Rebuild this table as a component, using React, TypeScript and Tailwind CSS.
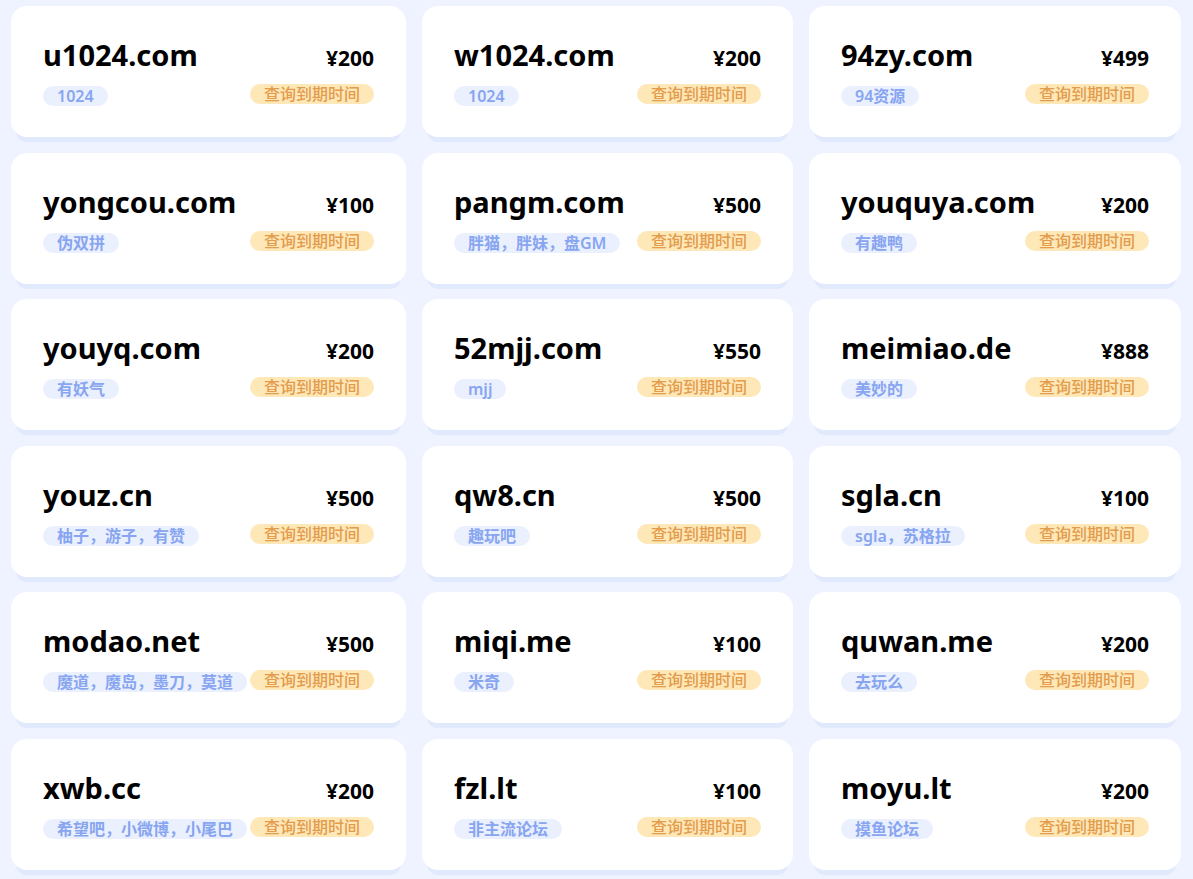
const domains = [
  { name: 'u1024.com', price: 200, tag: '1024' },
  { name: 'w1024.com', price: 200, tag: '1024' },
  { name: '94zy.com', price: 499, tag: '94资源' },
  { name: 'yongcou.com', price: 100, tag: '伪双拼' },
  { name: 'pangm.com', price: 500, tag: '胖猫，胖妹，盘GM' },
  { name: 'youquya.com', price: 200, tag: '有趣鸭' },
  { name: 'youyq.com', price: 200, tag: '有妖气' },
  { name: '52mjj.com', price: 550, tag: 'mjj' },
  { name: 'meimiao.de', price: 888, tag: '美妙的' },
  { name: 'youz.cn', price: 500, tag: '柚子，游子，有赞' },
  { name: 'qw8.cn', price: 500, tag: '趣玩吧' },
  { name: 'sgla.cn', price: 100, tag: 'sgla，苏格拉' },
  { name: 'modao.net', price: 500, tag: '魔道，魔岛，墨刀，莫道' },
  { name: 'miqi.me', price: 100, tag: '米奇' },
  { name: 'quwan.me', price: 200, tag: '去玩么' },
  { name: 'xwb.cc', price: 200, tag: '希望吧，小微博，小尾巴' },
  { name: 'fzl.lt', price: 100, tag: '非主流论坛' },
  { name: 'moyu.lt', price: 200, tag: '摸鱼论坛' },
];

function DomainCard({ name, price, tag }: { name: string; price: number; tag: string }) {
  return (
    <div className="h-[131px] bg-white rounded-[16px] px-8 pt-[34px] shadow-[0_10px_0_-5px_#e1e9fc]">
      <div className="flex items-end justify-between">
        <span className="text-[29px] leading-none font-bold text-black">{name}</span>
        <span className="text-[21px] leading-none font-bold text-black">¥{price}</span>
      </div>
      <div className="flex items-start justify-between mt-[15px]">
        <span className="mt-[2px] h-5 px-[14px] rounded-full bg-[#ebf0ff] text-[#87a5f0] text-[16px] leading-5 font-semibold whitespace-nowrap">
          {tag}
        </span>
        <span className="h-5 px-[14px] rounded-full bg-[#fee8b8] text-[#e39b4c] text-[16px] leading-5 font-medium whitespace-nowrap">
          查询到期时间
        </span>
      </div>
    </div>
  );
}

export default function App() {
  return (
    <div className="min-h-screen bg-[#eef3ff] pt-[6px] pl-[11px] font-['Noto_Sans','Noto_Sans_CJK_SC',sans-serif]">
      <div className="grid grid-cols-[395px_371px_372px] gap-x-4 gap-y-[15.6px]">
        {domains.map((d) => (
          <DomainCard key={d.name} {...d} />
        ))}
      </div>
    </div>
  );
}
